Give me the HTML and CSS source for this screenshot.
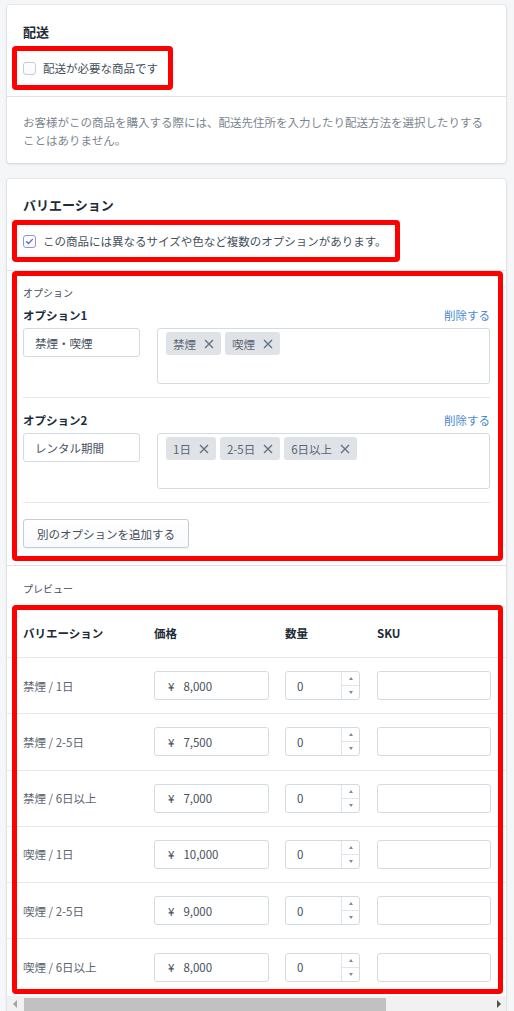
FILE: index.html
```html
<!DOCTYPE html>
<html lang="ja">
<head>
<meta charset="utf-8">
<title>配送とバリエーション</title>
<link rel="stylesheet" href="styles.css">
</head>
<body>
<div class="page">
  <section class="card">
    <div class="sec sec-ship">
      <h2 class="title">配送</h2>
      <div class="mark mark-a">
        <label class="check"><span class="box"></span><span>配送が必要な商品です</span></label>
      </div>
    </div>
    <div class="sec sec-note">
      <p class="note">お客様がこの商品を購入する際には、配送先住所を入力したり配送方法を選択したりすることはありません。</p>
    </div>
  </section>

  <section class="card card-var">
    <div class="sec sec-var">
      <h2 class="title">バリエーション</h2>
      <div class="mark mark-b">
        <label class="check"><span class="box on"><svg viewBox="0 0 12 12" width="11" height="11"><path d="M2.8 6.2l2.1 2.1 4.3-4.6" fill="none" stroke="#5c6ac4" stroke-width="1.5" stroke-linecap="round" stroke-linejoin="round"/></svg></span><span>この商品には異なるサイズや色など複数のオプションがあります。</span></label>
      </div>
    </div>

    <div class="sec sec-opts mark mark-c">
      <div class="small">オプション</div>
      <div class="opt">
        <div class="opt-head"><span class="opt-name">オプション1</span><a class="link">削除する</a></div>
        <div class="opt-body">
          <div class="field name">禁煙・喫煙</div>
          <div class="tags">
            <span class="tag">禁煙<svg viewBox="0 0 10 10" width="10" height="10"><path d="M1 1L9 9M9 1L1 9" stroke="#637381" stroke-width="1.4"/></svg></span>
            <span class="tag">喫煙<svg viewBox="0 0 10 10" width="10" height="10"><path d="M1 1L9 9M9 1L1 9" stroke="#637381" stroke-width="1.4"/></svg></span>
          </div>
        </div>
      </div>
      <div class="opt">
        <div class="opt-head"><span class="opt-name">オプション2</span><a class="link">削除する</a></div>
        <div class="opt-body">
          <div class="field name">レンタル期間</div>
          <div class="tags">
            <span class="tag">1日<svg viewBox="0 0 10 10" width="10" height="10"><path d="M1 1L9 9M9 1L1 9" stroke="#637381" stroke-width="1.4"/></svg></span>
            <span class="tag">2-5日<svg viewBox="0 0 10 10" width="10" height="10"><path d="M1 1L9 9M9 1L1 9" stroke="#637381" stroke-width="1.4"/></svg></span>
            <span class="tag">6日以上<svg viewBox="0 0 10 10" width="10" height="10"><path d="M1 1L9 9M9 1L1 9" stroke="#637381" stroke-width="1.4"/></svg></span>
          </div>
        </div>
      </div>
      <div class="opt-foot"><button class="btn" type="button">別のオプションを追加する</button></div>
    </div>

    <div class="sec-preview">
      <div class="small pad">プレビュー</div>
      <div class="table mark mark-d">
        <div class="tr th"><div>バリエーション</div><div>価格</div><div>数量</div><div>SKU</div></div>
        <div class="tr">
          <div class="lbl">禁煙 / 1日</div>
          <div><span class="field price"><span class="yen">¥</span>8,000</span></div>
          <div><span class="field qty"><span class="num">0</span><span class="spin"><i class="up"></i><i class="down"></i></span></span></div>
          <div><span class="field sku"></span></div>
        </div>
        <div class="tr">
          <div class="lbl">禁煙 / 2-5日</div>
          <div><span class="field price"><span class="yen">¥</span>7,500</span></div>
          <div><span class="field qty"><span class="num">0</span><span class="spin"><i class="up"></i><i class="down"></i></span></span></div>
          <div><span class="field sku"></span></div>
        </div>
        <div class="tr">
          <div class="lbl">禁煙 / 6日以上</div>
          <div><span class="field price"><span class="yen">¥</span>7,000</span></div>
          <div><span class="field qty"><span class="num">0</span><span class="spin"><i class="up"></i><i class="down"></i></span></span></div>
          <div><span class="field sku"></span></div>
        </div>
        <div class="tr">
          <div class="lbl">喫煙 / 1日</div>
          <div><span class="field price"><span class="yen">¥</span>10,000</span></div>
          <div><span class="field qty"><span class="num">0</span><span class="spin"><i class="up"></i><i class="down"></i></span></span></div>
          <div><span class="field sku"></span></div>
        </div>
        <div class="tr">
          <div class="lbl">喫煙 / 2-5日</div>
          <div><span class="field price"><span class="yen">¥</span>9,000</span></div>
          <div><span class="field qty"><span class="num">0</span><span class="spin"><i class="up"></i><i class="down"></i></span></span></div>
          <div><span class="field sku"></span></div>
        </div>
        <div class="tr last">
          <div class="lbl">喫煙 / 6日以上</div>
          <div><span class="field price"><span class="yen">¥</span>8,000</span></div>
          <div><span class="field qty"><span class="num">0</span><span class="spin"><i class="up"></i><i class="down"></i></span></span></div>
          <div><span class="field sku"></span></div>
        </div>
      </div>
      <div class="scrollbar">
        <span class="sb-btn"><i class="arr-l"></i></span>
        <span class="thumb"></span>
        <span class="sb-space"></span>
        <span class="sb-btn"><i class="arr-r"></i></span>
      </div>
      <div class="tail"></div>
    </div>
  </section>
</div>
</body>
</html>
```

FILE: styles.css
```css
* { box-sizing: border-box; }
html, body { margin: 0; padding: 0; }
body {
  background: #f4f6f8;
  font-family: "Noto Sans CJK JP", "Noto Sans", sans-serif;
  font-size: 11.5px;
  color: #454f5b;
  overflow: hidden;
}
.page { padding: 5px 8px 0 7px; }
.card {
  background: #fff;
  border-radius: 3px;
  box-shadow: 0 0 0 1px rgba(63,63,68,.05), 0 1px 3px rgba(63,63,68,.15);
}
.card + .card { margin-top: 16px; }

.sec { padding: 0 16px; }
.title {
  margin: 0;
  font-size: 13px;
  line-height: 18px;
  font-weight: 700;
  color: #212b36;
}
.sec-ship { padding-top: 18px; padding-bottom: 18px; border-bottom: 1px solid #dfe3e8; }
.sec-note { padding-top: 16px; padding-bottom: 14px; }
.note { margin: 0; line-height: 18px; color: #7b858f; }
.sec-var { padding-top: 17px; padding-bottom: 19px; border-bottom: 1px solid #dfe3e8; }

/* annotation boxes */
.mark { position: relative; }
.mark::after {
  content: "";
  position: absolute;
  border: 5px solid #ff0000;
  border-radius: 4px;
  pointer-events: none;
}
.mark-a, .mark-b { width: max-content; margin-top: 17px; }
.mark-a::after { top: -12px; bottom: -12px; left: -11px; right: -15px; }
.mark-b::after { top: -11px; bottom: -11px; left: -11px; right: -13px; }
.mark-c::after { top: 0; bottom: 4px; left: 5px; right: 3px; }
.mark-d::after { top: -4px; bottom: 2px; left: 5px; right: 3px; }

.check {
  display: flex;
  align-items: center;
  gap: 7px;
  height: 20px;
  line-height: 20px;
  color: #454f5b;
}
.box {
  width: 13px;
  height: 13px;
  border: 1px solid #c4cdd5;
  border-radius: 3px;
  background: linear-gradient(#fff, #f9fafb);
  display: flex;
  align-items: center;
  justify-content: center;
}
.box.on { border-color: #8e97d6; }

/* options */
.sec-opts { padding-top: 15px; padding-bottom: 17px; border-bottom: 1px solid #dfe3e8; }
.small { font-size: 10px; line-height: 14px; color: #454f5b; }
.small.pad { padding-left: 16px; }
.opt { padding: 14px 0 13px; border-bottom: 1px solid #e6e9ec; }
.small + .opt { padding-top: 7px; }
.opt-head {
  display: flex;
  justify-content: space-between;
  align-items: center;
  height: 16px;
  line-height: 16px;
}
.opt-name { font-weight: 700; color: #212b36; }
.link { color: #4a8bd0; text-decoration: none; }
.opt-body { display: flex; align-items: flex-start; gap: 17px; margin-top: 5px; }
.field {
  display: flex;
  align-items: center;
  height: 29px;
  border: 1px solid #d3dbe2;
  border-radius: 3px;
  background: #fff;
  color: #454f5b;
}
.field.name { width: 117px; padding-left: 11px; }
.tags {
  flex: 1;
  height: 56px;
  border: 1px solid #d3dbe2;
  border-radius: 3px;
  padding: 3px 8px;
  display: flex;
  align-items: flex-start;
  gap: 4px;
}
.tag {
  display: inline-flex;
  align-items: center;
  gap: 8px;
  height: 23px;
  padding: 0 7px;
  background: #dfe3e8;
  border-radius: 3px;
  color: #5c6670;
}
.opt-foot { padding-top: 16px; }
.btn {
  height: 29px;
  padding: 0 13px;
  border: 1px solid #c4cdd5;
  border-radius: 3px;
  background: linear-gradient(#fff, #f9fafb);
  box-shadow: 0 1px 0 rgba(22,29,37,.05);
  font-family: inherit;
  font-size: 11.5px;
  color: #454f5b;
}

/* preview table */
.sec-preview { padding-top: 16px; }
.table { margin-top: 13px; }
.tr {
  display: grid;
  grid-template-columns: 147px 131px 92px 1fr;
  align-items: center;
  height: 56.25px;
  border-bottom: 1px solid #e6e9ec;
}
.tr > div:first-child { padding-left: 16px; }
.tr.th { height: 49px; font-weight: 700; color: #212b36; }
.tr.last { border-bottom: 0; }
.lbl { color: #5c6670; }
.field.price { width: 115px; padding-left: 13px; }
.yen { margin-right: 9px; }
.field.qty { width: 75px; padding-left: 11px; justify-content: space-between; }
.spin {
  width: 18px;
  height: 100%;
  border-left: 1px solid #e1e5e9;
  display: flex;
  flex-direction: column;
}
.spin i {
  flex: 1;
  display: flex;
  align-items: center;
  justify-content: center;
}
.spin i + i { border-top: 1px solid #e1e5e9; }
.spin i::before {
  content: "";
  border-left: 2.5px solid transparent;
  border-right: 2.5px solid transparent;
}
.spin .up::before { border-bottom: 3px solid #7d8a96; }
.spin .down::before { border-top: 3px solid #7d8a96; }
.field.sku { width: 114px; }

.scrollbar {
  display: flex;
  height: 16px;
  background: #f1f1f1;
}
.sb-btn {
  width: 15px;
  display: flex;
  align-items: center;
  justify-content: center;
}
.arr-l {
  border-top: 4px solid transparent;
  border-bottom: 4px solid transparent;
  border-right: 4px solid #a3a3a3;
}
.arr-r {
  border-top: 4px solid transparent;
  border-bottom: 4px solid transparent;
  border-left: 4px solid #505050;
}
.thumb {
  width: 362px;
  margin: 2px 0 0 2px;
  background: #c1c1c1;
}
.sb-space { flex: 1; }
.tail { height: 20px; }
```
